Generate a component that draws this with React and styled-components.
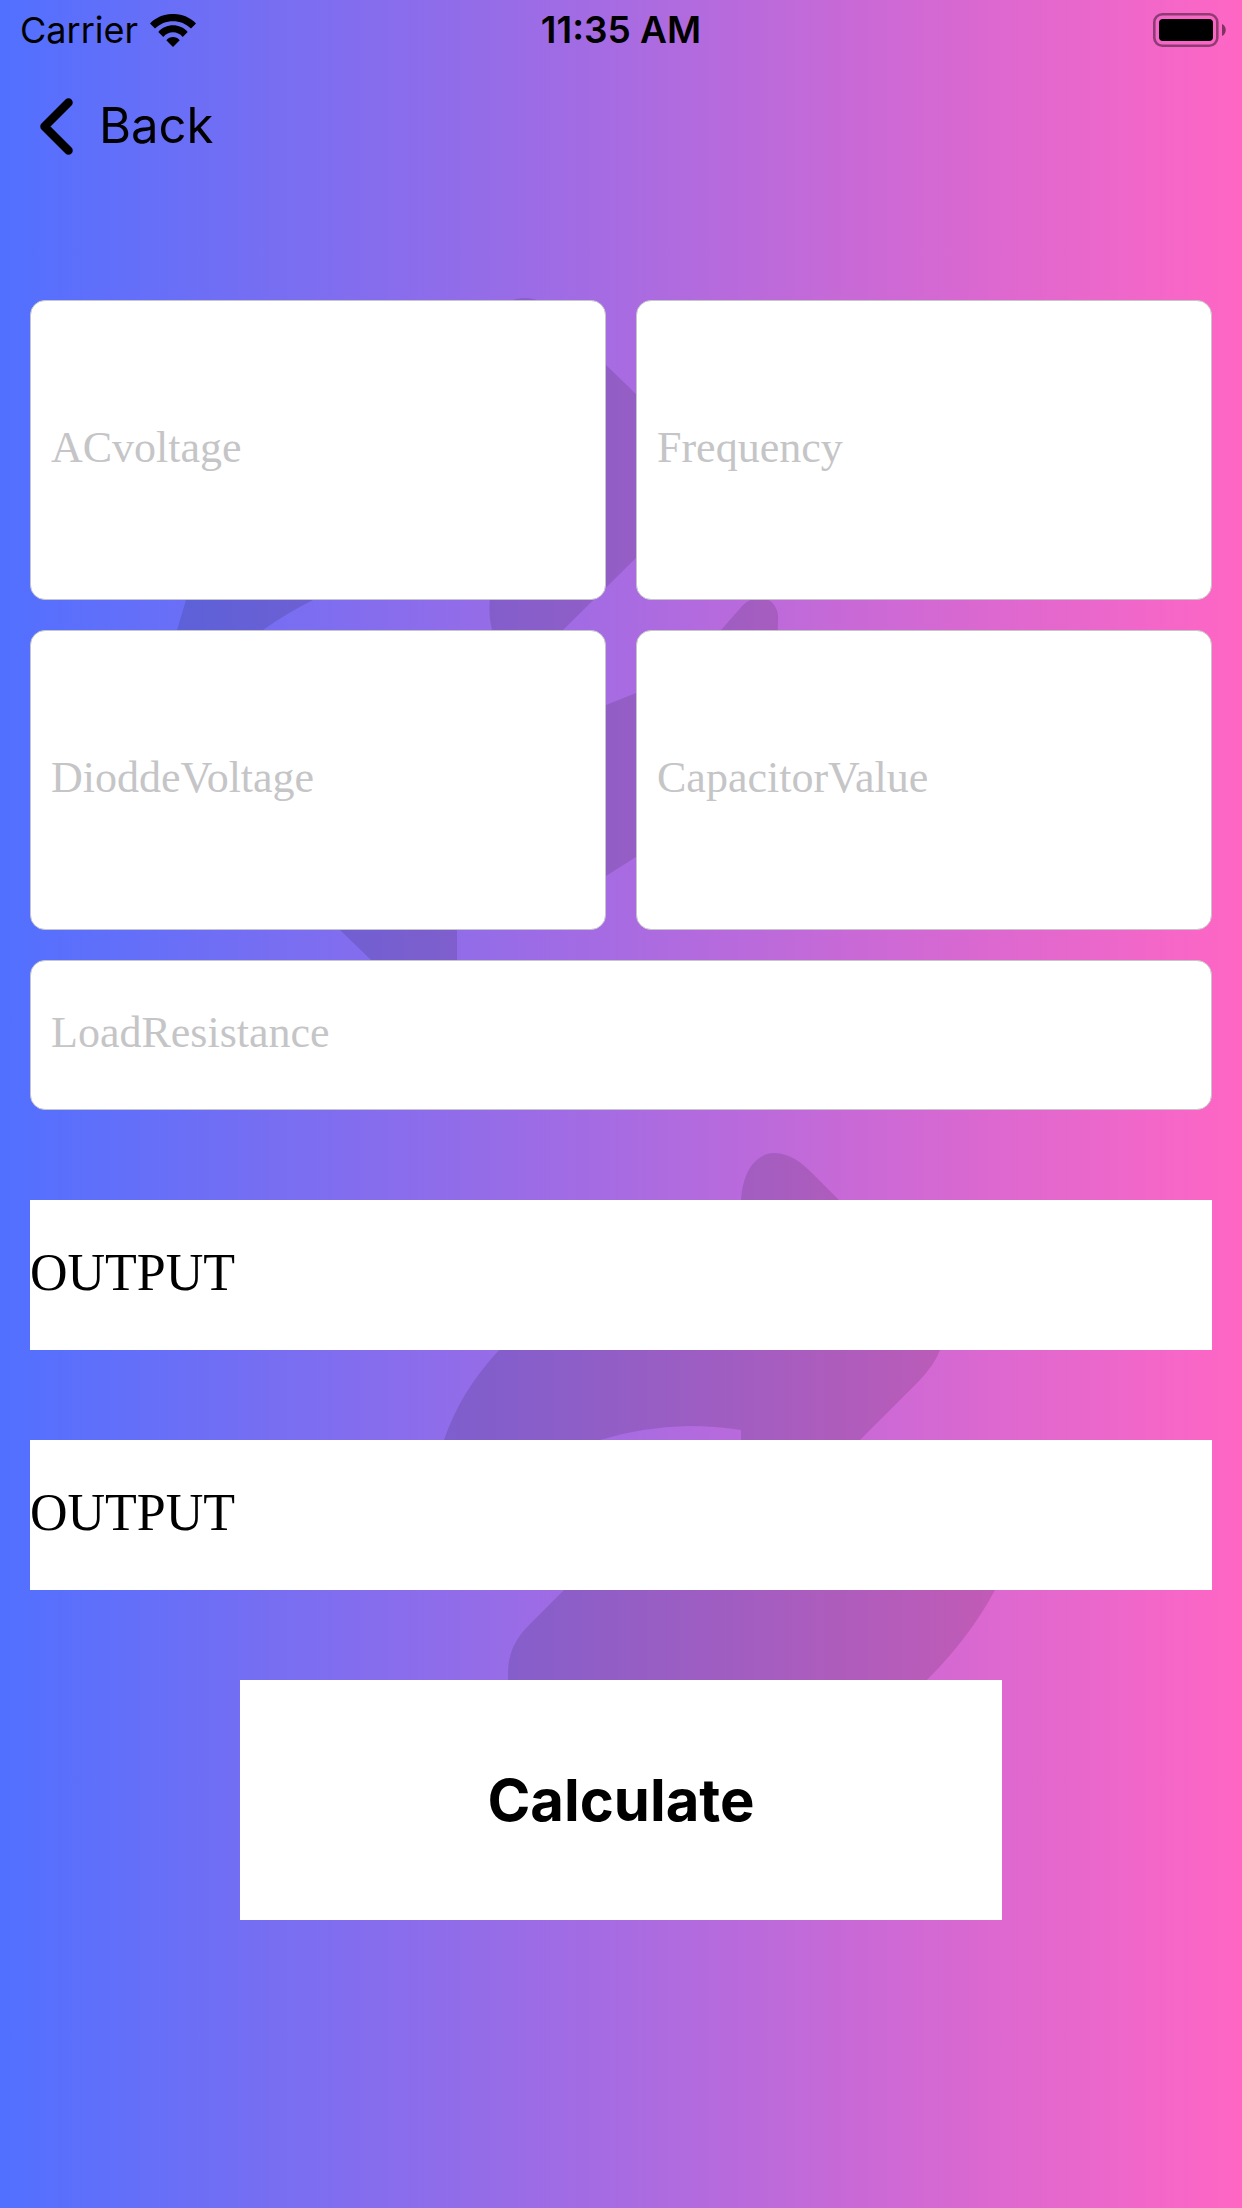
import React, { useState } from "react";
import styled, { createGlobalStyle } from "styled-components";

const sans = '"Inter", "Liberation Sans", sans-serif';
const serif = '"Liberation Serif", serif';

const GlobalStyle = createGlobalStyle`
  *, *::before, *::after { box-sizing: border-box; }
  html, body { margin: 0; }
`;

const Screen = styled.div`
  position: relative;
  isolation: isolate;
  min-height: 100vh;
  overflow: hidden;
  background: linear-gradient(90deg, #5170ff, #ff66c4);
  color: #000;
  font-family: ${sans};
`;

const Backdrop = styled.svg`
  position: absolute;
  inset: 0;
  z-index: -1;
  width: 100%;
  height: 100%;
  fill: #000;
  fill-opacity: 0.12;
`;

const StatusBar = styled.header`
  display: grid;
  grid-template-columns: 1fr auto 1fr;
  align-items: center;
  height: 60px;
  padding: 0 16px;
  font-size: 36px;
  line-height: 60px;
`;

const Carrier = styled.div`
  display: flex;
  align-items: center;
  gap: 12px;
  padding-left: 4px;
`;

const Time = styled.time`
  font-size: 37px;
  font-weight: 600;
`;

const BatterySlot = styled.div`
  display: flex;
  justify-content: flex-end;
`;

const NavBar = styled.nav`
  display: flex;
  align-items: center;
  height: 132px;
  padding: 0 40px;
`;

const BackButton = styled.button`
  display: flex;
  align-items: center;
  gap: 26px;
  padding: 0;
  border: 0;
  background: none;
  color: inherit;
  font: 400 49px/60px ${sans};
  cursor: pointer;
`;

const Form = styled.form`
  display: grid;
  gap: 90px;
  padding: 108px 30px 90px;
`;

const Fields = styled.div`
  display: grid;
  grid-template-columns: 1fr 1fr;
  gap: 30px;
`;

const Field = styled.input`
  grid-column: ${(p) => (p.$wide ? "1 / -1" : "auto")};
  width: 100%;
  min-width: 0;
  height: ${(p) => (p.$wide ? 150 : 300)}px;
  padding: 0 20px 6px;
  border: 1px solid #c6c6c8;
  border-radius: 15px;
  background: #fff;
  color: #000;
  font: 44px ${serif};

  &::placeholder {
    color: #c5c5c7;
    opacity: 1;
  }
`;

const Result = styled.output`
  display: flex;
  align-items: center;
  height: 150px;
  padding-bottom: 6px;
  background: #fff;
  font: 52px ${serif};
`;

const Actions = styled.div`
  display: grid;
  padding: 0 210px;
`;

const CalculateButton = styled.button`
  height: 240px;
  border: 0;
  border-radius: 0;
  background: #fff;
  color: #000;
  font: 700 58px/72px ${sans};
  cursor: pointer;
`;

const WifiIcon = () => (
  <svg width="46" height="33" viewBox="0 0 46 33" aria-hidden="true">
    <path d="M0 9.5C12-3.2 34-3.2 46 9.5L41 14.6C31.500 4.700 14.500 4.700 5 14.600Z" />
    <path d="M8.300 17.900C16 9 30 9 37.700 17.900L32.700 22.900C27.500 16.800 18.500 16.800 13.300 22.900Z" />
    <path d="M16.300 26.200C20 21.900 26 21.900 29.700 26.200L23 33Z" />
  </svg>
);

const BatteryIcon = () => (
  <svg width="73" height="34" viewBox="0 0 73 34" aria-hidden="true">
    <rect x="1.300" y="1.300" width="63" height="31.400" rx="8" fill="none" stroke="#000" strokeOpacity="0.42" strokeWidth="2.600" />
    <rect x="6" y="6" width="54" height="22" rx="4" />
    <path d="M69 11C74 13 74 21 69 23Z" fillOpacity="0.5" />
  </svg>
);

const ChevronIcon = () => (
  <svg width="33" height="57" viewBox="0 0 33 57" fill="none" aria-hidden="true">
    <path d="M28.500 4.500L4.500 28.500L28.500 52.500" stroke="#000" strokeWidth="8.500" strokeLinecap="round" strokeLinejoin="round" />
  </svg>
);

const Arrows = () => (
  <Backdrop viewBox="0 0 1242 2208" preserveAspectRatio="xMidYMin slice" aria-hidden="true">
    <path d="M490 334C490 310 507 298 525 298C541 298 552 308 562 320L606 365L636 394L680 438Q720 476 680 514L636 558L563 630L520 672C505 666 494 650 492 630C489 618 489 608 490 596V560C420 548 365 565 313 600Q287 613 263 630L220 690H168Q168 660 177 630L186 600C215 490 340 420 490 428Z" />
    <path d="M721 630L743 605Q750 598 760 598C773 598 779 610 778 620Q778 680 742 745Q700 820 636 857L606 876Q540 915 457 918V990H400L371 960L340 930L310 895Q290 865 320 835L457 700V730Q540 730 606 705L636 693Q680 672 721 630Z" />
    <path d="M741 1205C741 1171 757 1153 774 1153C790 1153 802 1163 812 1173L839 1200L935 1296Q952 1318 940 1350Q935 1364 919 1381L860 1440L741 1559V1430Q715 1426 688 1426Q642 1427 600 1440Q550 1458 520 1500H432Q434 1470 444 1440Q460 1392 499 1350C560 1280 650 1240 741 1240Z" />
    <path d="M620 1534L564 1590L530 1624Q508 1645 508 1672V1700H909L927 1680Q970 1637 995 1590L1000 1534Z" />
  </Backdrop>
);

const fields = [
  { name: "ACvoltage" },
  { name: "Frequency" },
  { name: "DioddeVoltage" },
  { name: "CapacitorValue" },
  { name: "LoadResistance", wide: true },
];

const emptyResults = ["OUTPUT", "OUTPUT"];

export default function App() {
  const [values, setValues] = useState({});
  const [results, setResults] = useState(emptyResults);

  const update = (event) =>
    setValues({ ...values, [event.target.name]: event.target.value });

  const calculate = (event) => {
    event.preventDefault();
    const [ac, freq, diode, cap, load] = fields.map((f) => parseFloat(values[f.name]));
    const peak = ac * Math.SQRT2 - 2 * diode;
    const ripple = peak / (2 * freq * cap * load);
    setResults(
      Number.isFinite(ripple)
        ? [(peak - ripple / 2).toFixed(3), ripple.toFixed(3)]
        : emptyResults
    );
  };

  return (
    <Screen>
      <GlobalStyle />
      <Arrows />
      <StatusBar>
        <Carrier>
          <span>Carrier</span>
          <WifiIcon />
        </Carrier>
        <Time>11:35 AM</Time>
        <BatterySlot>
          <BatteryIcon />
        </BatterySlot>
      </StatusBar>
      <NavBar>
        <BackButton type="button">
          <ChevronIcon />
          Back
        </BackButton>
      </NavBar>
      <Form onSubmit={calculate}>
        <Fields>
          {fields.map((f) => (
            <Field
              key={f.name}
              name={f.name}
              aria-label={f.name}
              placeholder={f.name}
              inputMode="decimal"
              value={values[f.name] || ""}
              onChange={update}
              $wide={f.wide}
            />
          ))}
        </Fields>
        {results.map((text, i) => (
          <Result key={i}>{text}</Result>
        ))}
        <Actions>
          <CalculateButton type="submit">Calculate</CalculateButton>
        </Actions>
      </Form>
    </Screen>
  );
}
